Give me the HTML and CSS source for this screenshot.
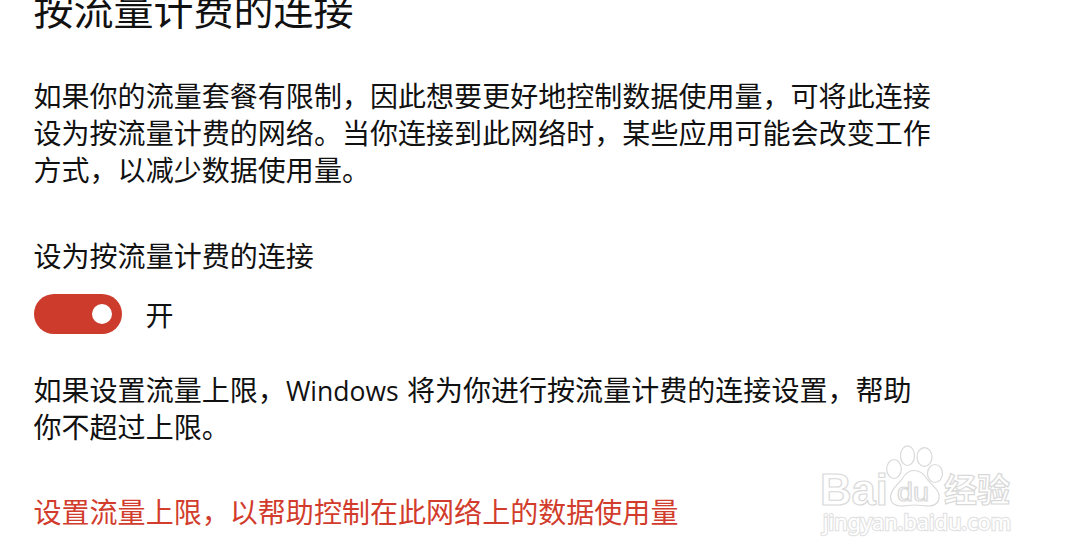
FILE: index.html
```
<!DOCTYPE html>
<html lang="zh-CN">
<head>
	<meta charset="UTF-8">
	<title>按流量计费的连接</title>
	<link rel="stylesheet" href="styles.css">
</head>
<body>
	<div class="page">
		<h1 class="title">按流量计费的连接</h1>
		<p class="desc">如果你的流量套餐有限制，因此想要更好地控制数据使用量，可将此连接<br>设为按流量计费的网络。当你连接到此网络时，某些应用可能会改变工作<br>方式，以减少数据使用量。</p>

		<!-- 开关 -->
		<div class="label">设为按流量计费的连接</div>
		<div class="switch-row">
			<button class="switch" role="switch" aria-checked="true" aria-label="设为按流量计费的连接"><span class="knob"></span></button>
			<span class="state">开</span>
		</div>

		<p class="limit">如果设置流量上限，<span class="en">Windows</span>将为你进行按流量计费的连接设置，帮助<br>你不超过上限。</p>
		<a class="link">设置流量上限，以帮助控制在此网络上的数据使用量</a>
	</div>

	<!-- 水印 -->
	<svg class="mark" width="210" height="100" viewBox="0 0 210 100">
		<g class="outline">
			<text class="brand" x="8" y="65" textLength="68" lengthAdjust="spacingAndGlyphs">Bai</text>
			<ellipse cx="82" cy="29" rx="7.3" ry="9.5"/>
			<ellipse cx="95.500" cy="15.700" rx="7" ry="9.800"/>
			<ellipse cx="112.500" cy="17" rx="7.5" ry="9.3"/>
			<ellipse cx="123" cy="33.500" rx="7.5" ry="9"/>
			<path d="M102 30.500C96 30.500 93 34 90 39C86 45 78.500 49 78.500 57C78.500 63 83 66 89 66C94 66 98 65 103 65C108 65 112 66 117 66C124 66 128 61 127 55C126 48 119 45 115 39C112 34 108 30.500 102 30.500Z"/>
			<text class="du" x="85" y="61" textLength="32" lengthAdjust="spacingAndGlyphs">du</text>
			<text class="cn" x="132" y="62" textLength="66" lengthAdjust="spacingAndGlyphs">经验</text>
		</g>
		<text class="url" x="11" y="90" textLength="188" lengthAdjust="spacingAndGlyphs">jingyan.baidu.com</text>
	</svg>
</body>
</html>
```
FILE: styles.css
```
*{margin:0;padding:0;box-sizing:border-box;}
body{width:1070px;height:560px;overflow:hidden;position:relative;background:#fff;color:#111;font-family:"Noto Sans CJK SC",sans-serif;}

.page{padding-left:33.5px;font-size:28px;line-height:37px;letter-spacing:.04px;white-space:nowrap;}
.title{height:34px;font-size:40px;font-weight:400;line-height:60px;letter-spacing:0;margin-top:-22px;}
.desc{margin-top:65px;}

/*开关*/
.label{margin-top:49px;}
.switch-row{display:flex;align-items:center;height:40px;margin-top:20px;}
.switch{display:flex;align-items:center;justify-content:flex-end;width:88px;height:40px;padding-right:10px;border:0;border-radius:20px;background:#cc3b2b;}
.knob{width:20px;height:20px;border-radius:50%;background:#fff;}
.state{margin-left:24px;}

.limit{margin-top:37px;}
.en{display:inline-block;width:121px;font-family:"Open Sans",sans-serif;font-size:26.5px;line-height:30px;letter-spacing:0;}
.link{display:block;margin-top:48px;color:#d23c2c;}

/*水印*/
.mark{position:absolute;left:812px;top:440px;}
.outline{fill:#fff;stroke:#d9d9d9;stroke-width:1.2;}
.brand{font:bold 44px "Liberation Sans",sans-serif;}
.du{font:26px "Liberation Sans",sans-serif;}
.cn{font:bold 33px "Noto Sans CJK SC",sans-serif;}
.url{font:21px "Noto Sans",sans-serif;fill:#fff;stroke:#e3e3e3;stroke-width:2.4px;paint-order:stroke;}
```
